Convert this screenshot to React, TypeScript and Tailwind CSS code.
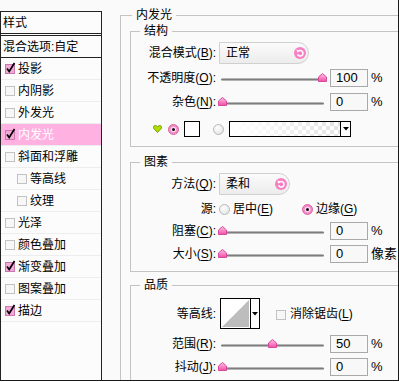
import type { ReactNode } from "react";

const STYLE_ITEMS = [
  { label: "投影", checked: true },
  { label: "内阴影" },
  { label: "外发光" },
  { label: "内发光", checked: true, active: true },
  { label: "斜面和浮雕" },
  { label: "等高线", sub: true },
  { label: "纹理", sub: true },
  { label: "光泽" },
  { label: "颜色叠加" },
  { label: "渐变叠加", checked: true },
  { label: "图案叠加" },
  { label: "描边", checked: true },
];

function CheckBox({ checked }: { checked?: boolean }) {
  return (
    <svg width="11" height="12" viewBox="0 0 11 12" className="shrink-0">
      <rect
        x="0.5"
        y="2.5"
        width="9"
        height="9"
        fill={checked ? "#f5a9d8" : "#f7f7f7"}
        stroke={checked ? "#c978ad" : "#c2c2c2"}
      />
      {checked ? (
        <path d="M2 6.5 L4.2 9.5 L9.5 1" fill="none" stroke="#000" strokeWidth="1.7" />
      ) : null}
    </svg>
  );
}

function Radio({ checked }: { checked?: boolean }) {
  return (
    <svg width="11" height="11" viewBox="0 0 11 11" className="shrink-0">
      <defs>
        <radialGradient id="rg-off" cx="0.4" cy="0.35" r="0.7">
          <stop offset="0" stopColor="#ffffff" />
          <stop offset="1" stopColor="#e2e2e2" />
        </radialGradient>
      </defs>
      {checked ? (
        <>
          <circle cx="5.5" cy="5.5" r="5" fill="#f38cc8" stroke="#d9649f" />
          <circle cx="5.5" cy="5.5" r="2.8" fill="#ffd6ee" />
          <circle cx="5.5" cy="5.5" r="1.5" fill="#111" />
        </>
      ) : (
        <circle cx="5.5" cy="5.5" r="5" fill="url(#rg-off)" stroke="#b9b9b9" />
      )}
    </svg>
  );
}

function ResetIcon() {
  return (
    <svg width="12" height="12" viewBox="0 0 12 12" className="shrink-0">
      <circle cx="6" cy="6" r="6" fill="#f77fc2" />
      <path
        d="M4.2 4.3 A2.8 2.8 0 1 1 3.6 7.4"
        fill="none"
        stroke="#fff"
        strokeWidth="1.5"
      />
      <path d="M2.4 2.6 L5.6 3.4 L3.4 5.8 Z" fill="#fff" />
    </svg>
  );
}

function Thumb({ left }: { left: number }) {
  return (
    <svg
      width="9"
      height="9"
      viewBox="0 0 9 9"
      className="absolute top-[4px]"
      style={{ left }}
    >
      <defs>
        <linearGradient id="th" x1="0" y1="0" x2="0" y2="1">
          <stop offset="0" stopColor="#ffc3e6" />
          <stop offset="1" stopColor="#ee4fa6" />
        </linearGradient>
      </defs>
      <path d="M4.5 0.5 L8.5 4 L8.5 8.5 L0.5 8.5 L0.5 4 Z" fill="url(#th)" stroke="#d8489a" />
    </svg>
  );
}

function Slider({ value }: { value: number }) {
  return (
    <div className="relative h-[18px] w-[108px] shrink-0">
      <div className="absolute left-[2px] top-[9px] h-[3px] w-[103px] rounded-full bg-[linear-gradient(#d2d2d2,#7d7d7d,#cfcfcf)]" />
      <Thumb left={value - 1} />
    </div>
  );
}

function NumBox({ value, unit }: { value: string; unit: string }) {
  return (
    <>
      <div className="ml-[3px] flex h-[18px] w-[38px] shrink-0 items-center border border-[#a9a9a9] bg-[#f8f8f8] pl-[5px] text-[13px]">
        {value}
      </div>
      <span className="ml-[3px] text-[13px]">{unit}</span>
    </>
  );
}

function Label({ children }: { children: ReactNode }) {
  return <span className="w-[85px] shrink-0 text-right">{children}</span>;
}

function SliderRow({
  label,
  value,
  unit = "%",
  className = "",
}: {
  label: ReactNode;
  value: number;
  unit?: string;
  className?: string;
}) {
  return (
    <div className={`flex h-[18px] items-center ${className}`}>
      <Label>{label}</Label>
      <div className="ml-[3px]">
        <Slider value={value} />
      </div>
      <NumBox value={String(value)} unit={unit} />
    </div>
  );
}

function Dropdown({ text, width }: { text: string; width: string }) {
  return (
    <div
      className={`ml-[3px] flex h-[22px] items-center justify-between rounded-r-full border border-[#d0d0d0] bg-[linear-gradient(#fbfbfb,#ececec)] pl-[6px] pr-[2px] ${width}`}
    >
      <span>{text}</span>
      <ResetIcon />
    </div>
  );
}

function Group({
  title,
  className = "",
  children,
}: {
  title: string;
  className?: string;
  children: ReactNode;
}) {
  return (
    <fieldset className={`border border-[#c4c4c4] ${className}`}>
      <legend className="ml-[9px] px-[4px] leading-[14px]">{title}</legend>
      {children}
    </fieldset>
  );
}

function Key({ k }: { k: string }) {
  return <u className="underline-offset-[2px]">{k}</u>;
}

export default function App() {
  return (
    <div className="flex h-[381px] w-[399px] border-b border-r border-[#1a1a1a] bg-[#fafafa] font-['Liberation_Sans','Noto_Sans_CJK_SC',sans-serif] text-[12px] leading-[14px] text-black">
      <div className="mt-[11px] flex w-[102px] shrink-0 flex-col border-l border-r border-t border-[#222] bg-[#fcfcfc]">
        <div className="flex h-[22px] items-center border-b border-[#222] pl-[2px]">样式</div>
        <div className="mt-[1px] flex h-[23px] items-center border-b border-t border-[#222] pl-[2px]">
          混合选项:自定
        </div>
        {STYLE_ITEMS.map((it) => (
          <div
            key={it.label}
            className={`flex h-[22px] items-center border-b border-[#ededed] ${
              it.active ? "bg-[#ffb2e1] text-white" : ""
            } ${it.sub ? "pl-[16px]" : "pl-[4px]"}`}
          >
            <div className="-mt-[2px]">
              <CheckBox checked={it.checked} />
            </div>
            <span className="ml-[2px]">{it.label}</span>
          </div>
        ))}
      </div>

      <div className="min-w-0 flex-1 overflow-hidden pl-[18px] pt-[8px]">
        <fieldset className="w-[330px] border border-[#c4c4c4] pb-[40px] pl-[9px] pt-[2px]">
          <legend className="ml-[2px] px-[4px] leading-[14px]">内发光</legend>

          <Group title="结构" className="pb-[9px] pt-[4px]">
            <div className="flex h-[22px] items-center">
              <Label>
                混合模式(<Key k="B" />):
              </Label>
              <Dropdown text="正常" width="w-[90px]" />
            </div>
            <SliderRow
              className="mt-[5px]"
              label={
                <>
                  不透明度(<Key k="O" />):
                </>
              }
              value={100}
            />
            <SliderRow
              className="mt-[6px]"
              label={
                <>
                  杂色(<Key k="N" />):
                </>
              }
              value={0}
            />
            <div className="mt-[10px] flex h-[16px] items-center">
              <svg width="9" height="8" viewBox="0 0 9 8" className="ml-[22px] shrink-0">
                <path
                  d="M4.5 7.5 L0.8 3.6 C-0.2 2.4 0.6 0.5 2.2 0.5 C3.3 0.5 4 1.2 4.5 2 C5 1.2 5.7 0.5 6.8 0.5 C8.4 0.5 9.2 2.4 8.2 3.6 Z"
                  fill="#b4dc00"
                  stroke="#5e8c00"
                  strokeWidth="0.8"
                />
              </svg>
              <div className="ml-[6px]">
                <Radio checked />
              </div>
              <div className="ml-[5px] h-[16px] w-[16px] shrink-0 border border-black bg-white" />
              <div className="ml-[13px]">
                <Radio />
              </div>
              <div className="ml-[5px] flex h-[16px] w-[122px] shrink-0 border border-black">
                <div className="flex-1 bg-[linear-gradient(to_right,#ffffff,rgba(255,255,255,0)),conic-gradient(#e4e4e4_25%,#ffffff_0_50%,#e4e4e4_0_75%,#ffffff_0)] bg-[length:100%_100%,8px_8px]" />
                <div className="flex w-[10px] items-center justify-center border-l border-black bg-white">
                  <svg width="6" height="4" viewBox="0 0 6 4">
                    <path d="M0 0 H6 L3 3.5 Z" fill="#000" />
                  </svg>
                </div>
              </div>
            </div>
          </Group>

          <Group title="图素" className="mt-[8px] pb-[8px] pt-[4px]">
            <div className="flex h-[22px] items-center">
              <Label>
                方法(<Key k="Q" />):
              </Label>
              <Dropdown text="柔和" width="w-[71px]" />
            </div>
            <div className="mt-[6px] flex h-[16px] items-center">
              <Label>源:</Label>
              <div className="ml-[3px]">
                <Radio />
              </div>
              <span className="ml-[3px]">
                居中(<Key k="E" />)
              </span>
              <div className="ml-[29px]">
                <Radio checked />
              </div>
              <span className="ml-[3px]">
                边缘(<Key k="G" />)
              </span>
            </div>
            <SliderRow
              className="mt-[5px]"
              label={
                <>
                  阻塞(<Key k="C" />):
                </>
              }
              value={0}
            />
            <SliderRow
              className="mt-[5px]"
              label={
                <>
                  大小(<Key k="S" />):
                </>
              }
              value={0}
              unit="像素"
            />
          </Group>

          <Group title="品质" className="mt-[6px] pb-[40px] pt-[6px]">
            <div className="flex h-[31px] items-center">
              <Label>等高线:</Label>
              <div className="ml-[4px] flex h-[31px] shrink-0 border border-black bg-white">
                <svg width="29" height="29" viewBox="0 0 29 29">
                  <polygon points="1,28 28,1 28,28" fill="#bdbdbd" />
                </svg>
                <div className="flex w-[9px] items-center justify-center border-l border-black">
                  <svg width="6" height="4" viewBox="0 0 6 4">
                    <path d="M0 0 H6 L3 3.5 Z" fill="#000" />
                  </svg>
                </div>
              </div>
              <div className="ml-[16px]">
                <CheckBox />
              </div>
              <span className="ml-[3px]">
                消除锯齿(<Key k="L" />)
              </span>
            </div>
            <SliderRow
              className="mt-[6px]"
              label={
                <>
                  范围(<Key k="R" />):
                </>
              }
              value={50}
            />
            <SliderRow
              className="mt-[5px]"
              label={
                <>
                  抖动(<Key k="J" />):
                </>
              }
              value={0}
            />
          </Group>
        </fieldset>
      </div>
    </div>
  );
}
